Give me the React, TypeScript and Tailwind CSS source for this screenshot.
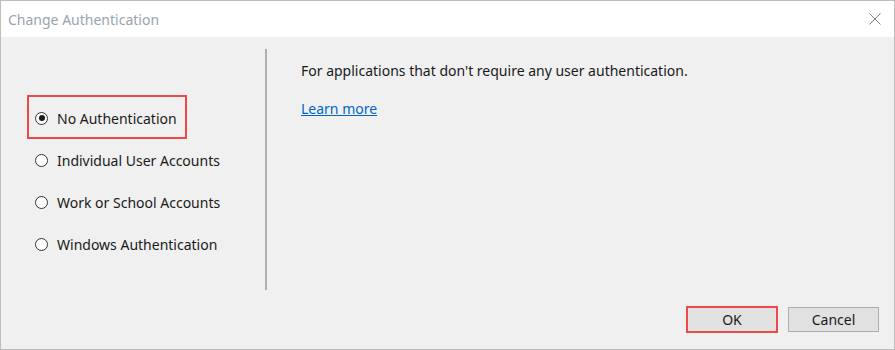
const options = [
  'No Authentication',
  'Individual User Accounts',
  'Work or School Accounts',
  'Windows Authentication',
];

function Radio({ checked }: { checked: boolean }) {
  return (
    <span className="flex h-[13px] w-[13px] items-center justify-center rounded-full border border-[#333] bg-white">
      {checked && <span className="h-[6px] w-[6px] rounded-full bg-[#1a1a1a]" />}
    </span>
  );
}

export default function App() {
  const selected = 0;

  return (
    <div
      className="relative flex h-[350px] w-[895px] flex-col border border-[#bdbdbd] bg-[#f0f0f0] text-[14px] text-[#1a1a1a]"
      style={{ fontFamily: '"Segoe UI", "Noto Sans", sans-serif' }}
    >
      {/* title bar */}
      <div className="flex h-[36px] items-center justify-between bg-white pl-[7px] pr-[12px]">
        <span className="text-[#9aa3b0]">Change Authentication</span>
        <svg width="12" height="12" viewBox="0 0 12 12" className="mr-[1px]">
          <path d="M0.5 0.5 L11.5 11.5 M11.5 0.5 L0.5 11.5" stroke="#808080" strokeWidth="1" />
        </svg>
      </div>

      {/* content */}
      <div className="flex h-[241px] mt-[12px]">
        <div className="w-[264px] pl-[34px] pt-[48px]">
          {options.map((label, i) => (
            <label key={label} className="flex h-[42px] items-center gap-[9px]">
              <Radio checked={i === selected} />
              <span>{label}</span>
            </label>
          ))}
        </div>
        <div className="w-[2px] bg-[#b0b0b0]" />
        <div className="pl-[34px] pt-[12px]">
          <p className="leading-[20px]">For applications that don't require any user authentication.</p>
          <a href="#" className="mt-[18px] block leading-[20px] text-[#0066cc] underline">
            Learn more
          </a>
        </div>
      </div>

      {/* footer */}
      <div className="mt-[16px] flex justify-end gap-[10px] pr-[15px]">
        <button className="h-[27px] w-[92px] border-2 border-[#f04848] bg-[#e1e1e1]">OK</button>
        <button className="mt-[1px] h-[25px] w-[91px] border border-[#adadad] bg-[#e1e1e1]">Cancel</button>
      </div>

      {/* annotation box around selected option */}
      <div className="absolute left-[26px] top-[94px] h-[44px] w-[160px] border-2 border-[#f04848]" />
    </div>
  );
}
